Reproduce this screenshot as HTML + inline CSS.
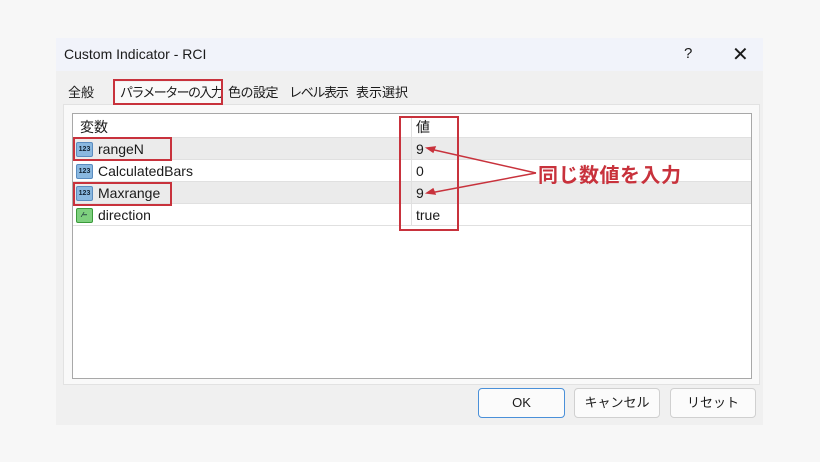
<!DOCTYPE html>
<html><head><meta charset="utf-8"><style>
*{margin:0;padding:0;box-sizing:border-box}
body{width:820px;height:462px;background:#f7f7f7;position:relative;overflow:hidden;font-family:"Liberation Sans","Noto Sans CJK JP",sans-serif;font-size:13px;color:#1a1a1a}
.a{position:absolute}
.dlg{left:56px;top:38px;width:707px;height:387px;background:#f0f0f0}
.title{left:56px;top:38px;width:707px;height:33px;background:#f1f3fa}
.tab{top:82px;height:22px;font-size:13px;line-height:22px;padding:0 5px;background:#f0f0f0;white-space:nowrap}
.row{left:73px;width:678px;height:22px;line-height:22px;font-size:14px;border-bottom:1px solid #e0e0e0}
.red{border:2px solid #c8323c}
.ic{position:absolute;left:3px;top:4px;width:17px;height:15px;border-radius:2px;background:#8ab8e0;border:1px solid #5a8cc0;font-size:7px;line-height:13px;text-align:center;color:#123;font-weight:bold}
.btn{top:388px;height:30px;background:#fbfbfb;border:1px solid #d0d0d0;border-radius:4px;text-align:center;line-height:28px;font-size:13px}
</style></head><body>
<div class="a dlg"></div>
<div class="a title"></div>
<div class="a" style="left:64px;top:46px;font-size:14px">Custom Indicator - RCI</div>
<div class="a" style="left:684px;top:45px;font-size:15px">?</div>
<div class="a" style="left:732px;top:42px;font-size:20px">✕</div>
<div class="a" style="left:63px;top:104px;width:697px;height:281px;background:#f9f9f9;border:1px solid #e2e2e2"></div>
<div class="a tab" style="left:63px">全般</div>
<div class="a tab" style="left:115px;background:#f9f9f9;letter-spacing:-1.6px">パラメーターの入力</div>
<div class="a tab" style="left:223px;letter-spacing:-0.5px">色の設定</div>
<div class="a tab" style="left:284px;letter-spacing:-1.3px">レベル表示</div>
<div class="a tab" style="left:351px">表示選択</div>
<div class="a red" style="left:113px;top:79px;width:110px;height:26px"></div>
<div class="a" style="left:72px;top:113px;width:680px;height:266px;background:#fff;border:1px solid #a8a8a8"></div>
<div class="a row" style="top:116px"><span class="a" style="left:7px">変数</span><span class="a" style="left:343px">値</span></div>
<div class="a row" style="top:138px;background:#ebebeb"><div class="ic">123</div><span class="a" style="left:25px">rangeN</span><span class="a" style="left:343px">9</span></div>
<div class="a row" style="top:160px"><div class="ic">123</div><span class="a" style="left:25px">CalculatedBars</span><span class="a" style="left:343px">0</span></div>
<div class="a row" style="top:182px;background:#ebebeb"><div class="ic">123</div><span class="a" style="left:25px">Maxrange</span><span class="a" style="left:343px">9</span></div>
<div class="a row" style="top:204px"><div class="ic" style="background:#7ed07e;border-color:#3a9a3a">⁄‒</div><span class="a" style="left:25px">direction</span><span class="a" style="left:343px">true</span></div>
<div class="a" style="left:411px;top:116px;width:1px;height:110px;background:#e0e0e0"></div>
<div class="a red" style="left:73px;top:137px;width:99px;height:24px"></div>
<div class="a red" style="left:73px;top:182px;width:99px;height:24px"></div>
<div class="a red" style="left:399px;top:116px;width:60px;height:115px"></div>
<svg class="a" style="left:0;top:0" width="820" height="462"><g stroke="#c8323c" stroke-width="1.5" fill="#c8323c"><line x1="536" y1="173" x2="430" y2="149"/><line x1="536" y1="173" x2="430" y2="193"/><polygon points="427,148 435,147 433,152" /><polygon points="427,193 433,189 435,194"/></g></svg>
<div class="a" style="left:538px;top:159px;font-size:20px;font-weight:bold;color:#c8323c;letter-spacing:0.5px">同じ数値を入力</div>
<div class="a btn" style="left:478px;width:87px;border:1px solid #4a90d9">OK</div>
<div class="a btn" style="left:574px;width:86px">キャンセル</div>
<div class="a btn" style="left:670px;width:86px">リセット</div>
</body></html>
